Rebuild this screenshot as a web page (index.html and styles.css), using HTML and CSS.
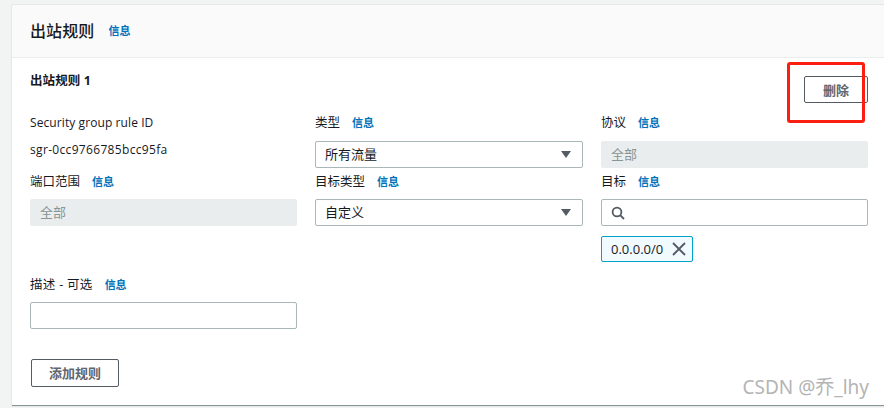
FILE: index.html
```html
<!DOCTYPE html>
<html lang="zh">
<head>
<meta charset="utf-8">
<title>出站规则</title>
<link rel="stylesheet" href="styles.css">
</head>
<body>
<section class="card">
  <header class="card-head">
    <h2 class="title">出站规则</h2>
    <a class="info info-head">信息</a>
  </header>
  <div class="card-body">
    <div class="rule-head">
      <h3 class="rule-title">出站规则 1</h3>
      <button class="btn btn-delete">删除</button>
    </div>
    <div class="grid">
      <div class="field">
        <div class="label-row"><span class="label label-latin">Security group rule ID</span></div>
        <div class="static">sgr-0cc9766785bcc95fa</div>
      </div>
      <div class="field">
        <div class="label-row"><span class="label">类型</span><a class="info">信息</a></div>
        <div class="control select"><span>所有流量</span><i class="caret"></i></div>
      </div>
      <div class="field">
        <div class="label-row"><span class="label">协议</span><a class="info">信息</a></div>
        <div class="control disabled">全部</div>
      </div>

      <div class="field">
        <div class="label-row"><span class="label">端口范围</span><a class="info">信息</a></div>
        <div class="control disabled">全部</div>
      </div>
      <div class="field">
        <div class="label-row"><span class="label">目标类型</span><a class="info">信息</a></div>
        <div class="control select"><span>自定义</span><i class="caret"></i></div>
      </div>
      <div class="field">
        <div class="label-row"><span class="label">目标</span><a class="info">信息</a></div>
        <div class="control search">
          <svg class="search-icon" width="14" height="14" viewBox="0 0 14 14" fill="none" stroke="#545b64" stroke-width="1.8"><circle cx="6" cy="6" r="4.4"/><path d="M9.2 9.2 13 13"/></svg>
        </div>
        <div class="chip"><span>0.0.0.0/0</span>
          <svg width="14" height="14" viewBox="0 0 14 14" fill="none" stroke="#545b64" stroke-width="1.8"><path d="M1 1 13 13M13 1 1 13"/></svg>
        </div>
      </div>

      <div class="field field-desc">
        <div class="label-row"><span class="label label-desc">描述 - 可选</span><a class="info">信息</a></div>
        <div class="control"></div>
      </div>
    </div>
    <button class="btn btn-add">添加规则</button>
  </div>
</section>
<div class="highlight"></div>
<div class="watermark">CSDN @乔_lhy</div>
</body>
</html>
```
FILE: styles.css
```css
* { box-sizing: border-box; }
html, body { margin: 0; padding: 0; }
body {
  width: 884px;
  height: 408px;
  overflow: hidden;
  position: relative;
  background: #f2f3f3;
  color: #16191f;
  font-family: "Open Sans", "Noto Sans CJK SC", sans-serif;
  font-size: 13px;
  padding: 5px 0 0 12px;
}
.card {
  width: 900px;
  height: 401px;
  background: #fff;
  border-bottom: 1px solid #879596;
  box-shadow: 0 0 1px rgba(0, 28, 36, 0.3);
}
.card-head {
  height: 53px;
  background: #fafafa;
  border-bottom: 1px solid #eaeded;
  padding: 0 18px;
  display: flex;
  align-items: center;
  gap: 14px;
}
.title {
  margin: 0;
  font-size: 16px;
  font-weight: 500;
  line-height: 22px;
  letter-spacing: 0.1px;
}
.info {
  color: #0073bb;
  font-size: 11px;
  font-weight: 700;
  line-height: 16px;
}
.card-body { padding: 0 0 0 18px; width: 856px; }
.rule-head {
  height: 57px;
  display: flex;
  justify-content: space-between;
  align-items: flex-start;
}
.rule-title {
  margin: 14px 0 0;
  font-size: 12.5px;
  font-weight: 700;
  line-height: 18px;
  letter-spacing: 0.1px;
}
.btn {
  background: #fff;
  border: 1px solid #545b64;
  border-radius: 2px;
  color: #5f666f;
  font: 700 13px "Open Sans", "Noto Sans CJK SC", sans-serif;
  padding: 0 0 1px;
}
.btn-delete { width: 64px; height: 27px; margin-top: 18px; }
.btn-add { width: 88px; height: 28px; margin: 27px 0 0 1px; display: block; }
.grid {
  display: grid;
  grid-template-columns: 267px 268px 267px;
  column-gap: 18px;
  grid-template-rows: 58px 103px 58px;
  width: 838px;
  margin-top: -2px;
}
.field { min-width: 0; }
.field-desc { grid-column: 1; }
.label-row {
  height: 19px;
  display: flex;
  align-items: center;
  gap: 12px;
}
.field:nth-child(n+4) .label-row { padding-top: 2px; }
.label { font-size: 12.5px; line-height: 18px; }
.label-latin { font-size: 12px; letter-spacing: 0.09px; }
.label-desc { letter-spacing: 0.3px; }
.static { margin-top: 9px; font-size: 12px; line-height: 18px; letter-spacing: 0.33px; }
.control {
  height: 27px;
  margin-top: 9px;
  border: 1px solid #aab7b8;
  border-radius: 2px;
  background: #fff;
  padding: 0 9px 2px;
  display: flex;
  align-items: center;
  justify-content: space-between;
  line-height: 18px;
}
.control.disabled {
  background: #eaeded;
  border-color: #eaeded;
  color: #879596;
}
.caret {
  width: 0;
  height: 0;
  border-left: 5px solid transparent;
  border-right: 5px solid transparent;
  border-top: 7px solid #545b64;
  margin: 2px 2px 0 0;
}
.search { justify-content: flex-start; padding-bottom: 0; }
.chip {
  margin-top: 10px;
  width: 92px;
  height: 26px;
  padding: 0 6px 0 9px;
  border: 1px solid #00a1c9;
  border-radius: 2px;
  background: #f1faff;
  display: flex;
  align-items: center;
  justify-content: space-between;
}
.highlight {
  position: absolute;
  left: 787px;
  top: 62px;
  width: 78px;
  height: 61px;
  border: 3px solid #fb1f12;
  border-radius: 3px;
}
.watermark {
  position: absolute;
  right: 15px;
  top: 374px;
  font-family: "Noto Sans", "Noto Sans CJK SC", sans-serif;
  font-size: 19px;
  line-height: 26px;
  color: #b4b4b4;
}
```
